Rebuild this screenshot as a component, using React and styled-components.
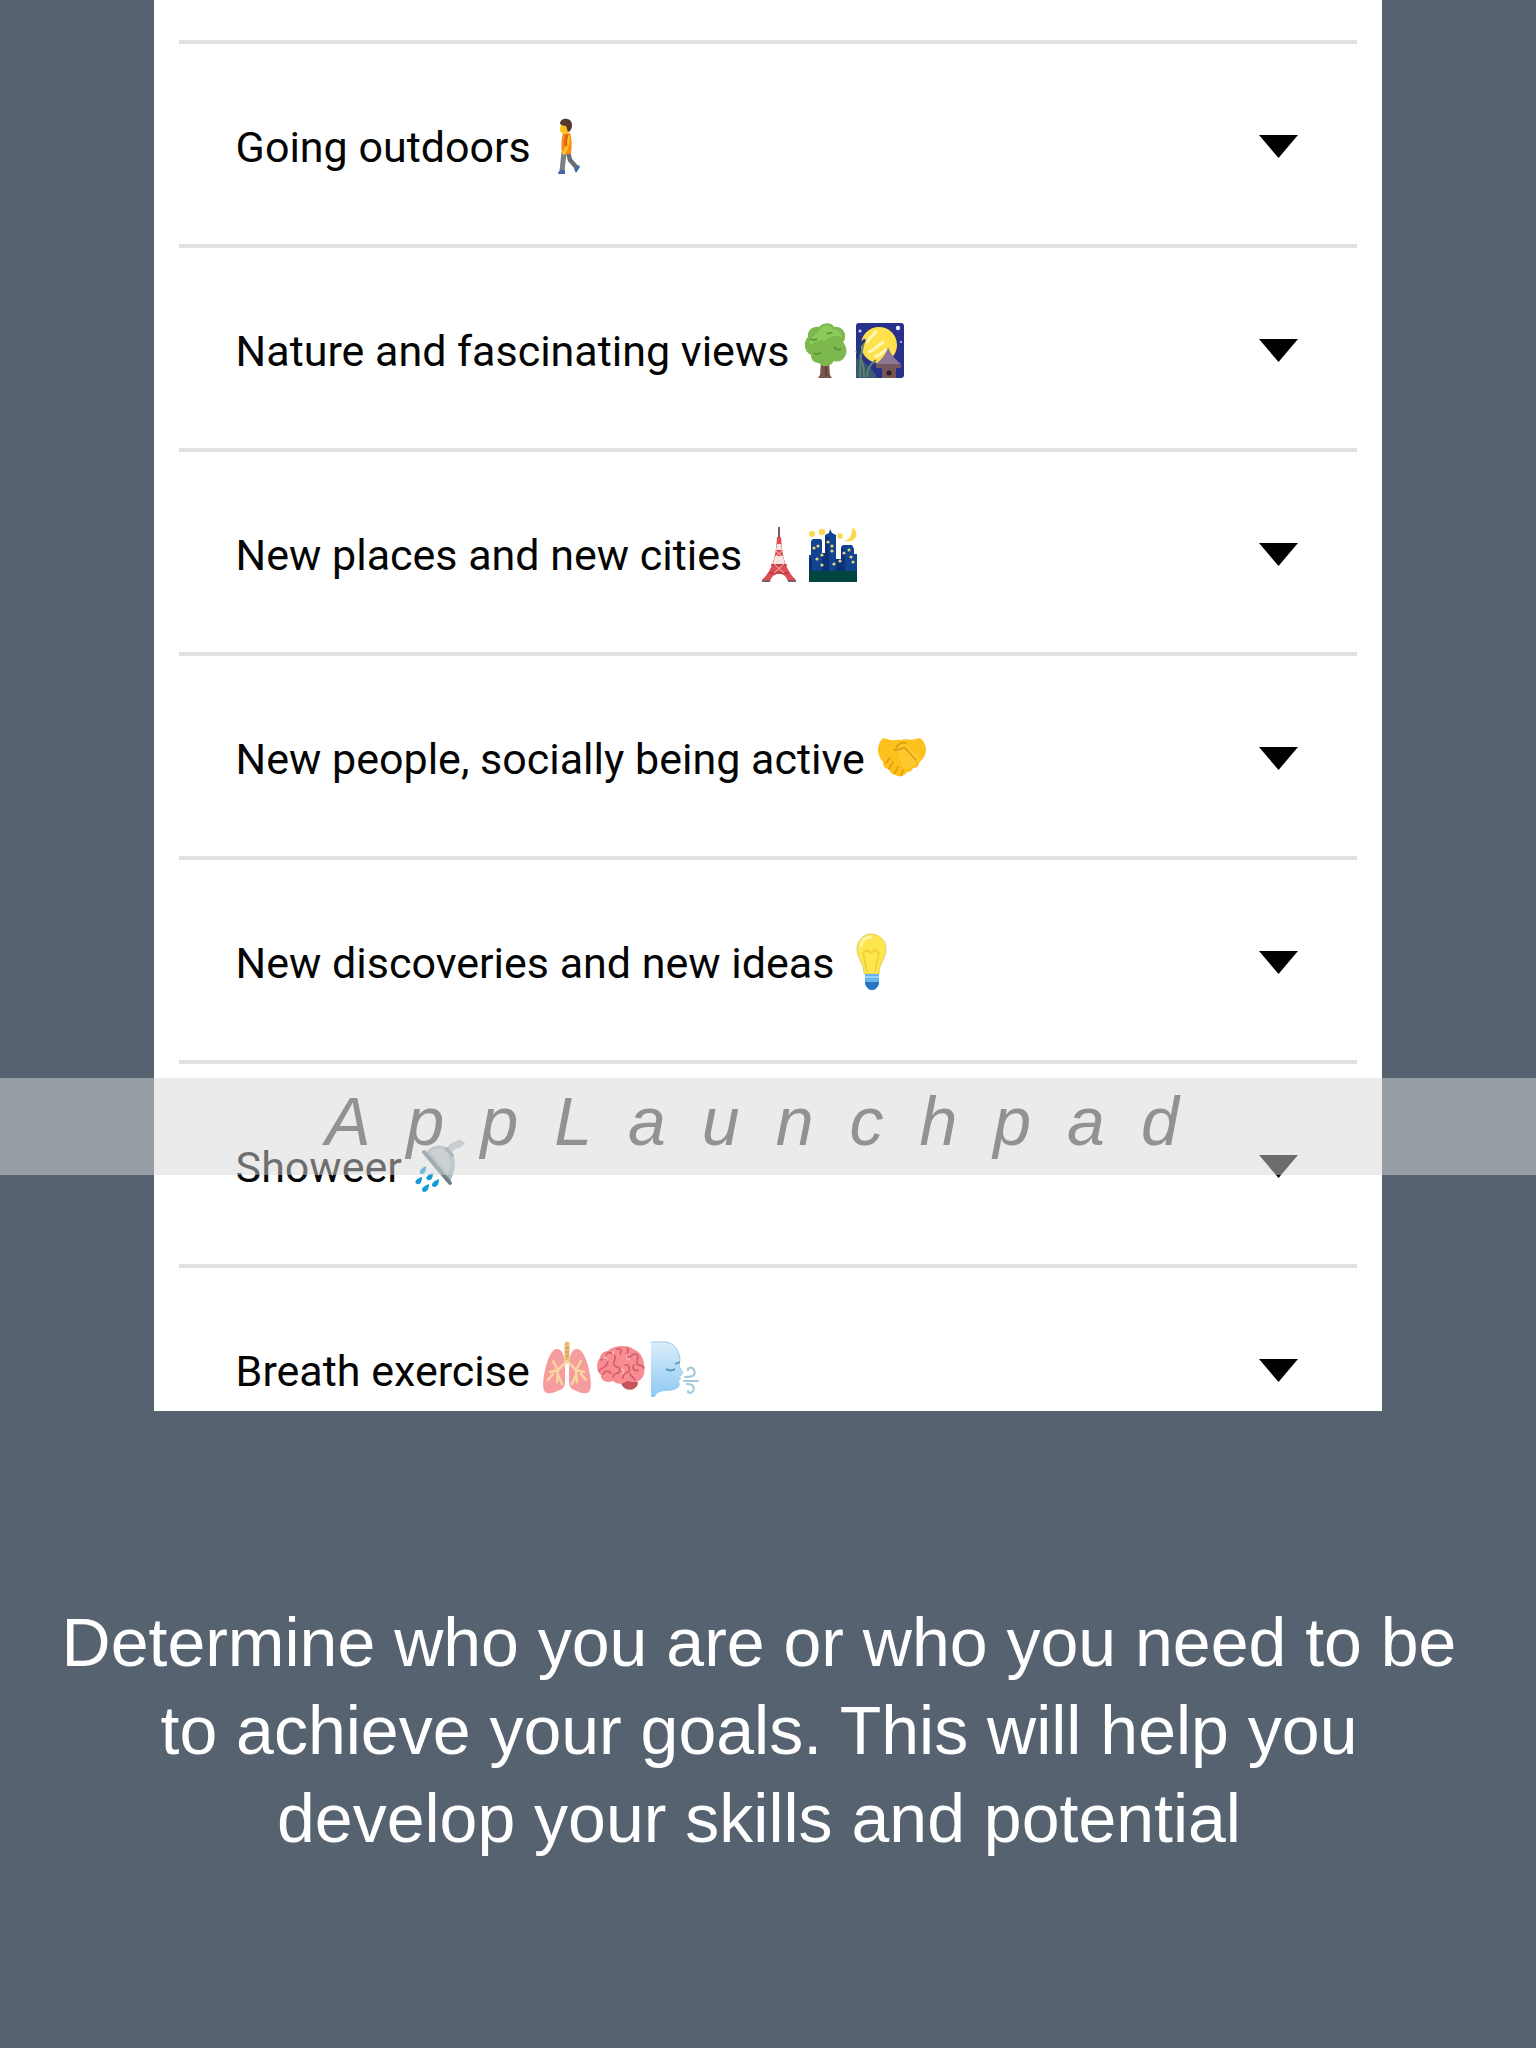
import React from "react";
import styled, { createGlobalStyle } from "styled-components";

const GlobalStyle = createGlobalStyle`
  *, *::before, *::after { box-sizing: border-box; }
  body {
    margin: 0;
    background: #566270;
    font-family: Roboto, "Liberation Sans", sans-serif;
  }
`;

const Page = styled.main`
  position: relative;
  min-height: 100vh;
  background: #566270;
`;

const Card = styled.section`
  width: 80%;
  margin: 0 auto;
  padding: 40px 25px 0;
  background: #fff;
`;

const List = styled.ul`
  margin: 0;
  padding: 0;
  list-style: none;
`;

const Item = styled.li`
  border-top: 4px solid #e1e1e1;
`;

const Row = styled.button`
  display: flex;
  align-items: center;
  justify-content: space-between;
  width: 100%;
  padding: 75px 59px 69px 57px;
  border: 0;
  background: none;
  color: #050505;
  font: 400 43px/56px Roboto, "Liberation Sans", sans-serif;
  text-align: left;
  cursor: pointer;

  ${Item}:last-child & {
    padding-bottom: 12px;
  }
`;

const Label = styled.span`
  display: flex;
  align-items: center;
  gap: 10px;
`;

const Emojis = styled.span`
  display: flex;
`;

const Glyph = styled.svg`
  display: block;
  width: 54px;
  height: 56px;
  overflow: visible;
`;

const Caret = styled.svg`
  display: block;
  flex: none;
  width: 39px;
  height: 23px;
  margin-bottom: 2px;
`;

const Watermark = styled.div`
  position: absolute;
  top: 1078px;
  left: 0;
  right: 0;
  height: 97px;
  padding-left: 4px;
  background: rgba(215, 215, 215, 0.5);
  color: #949191;
  font: italic 400 68px/86px "Liberation Sans", Arial, sans-serif;
  letter-spacing: 36px;
  text-align: center;
  white-space: nowrap;
  pointer-events: none;
`;

const Caption = styled.p`
  margin: 0;
  padding: 187px 58px 0 40px;
  color: #fff;
  font: 400 68px/88px "Liberation Sans", Arial, sans-serif;
  text-align: center;
`;

const Emoji = ({ name, children }) => (
  <Glyph viewBox="0 0 54 56" role="img" aria-label={name}>
    {children}
  </Glyph>
);

const Walker = () => (
  <Emoji name="person walking">
    <path d="M23 33 21 52" stroke="#7b8083" strokeWidth="5" fill="none" />
    <path d="M27 33 29 41 36 49" stroke="#686e71" strokeWidth="4.5" fill="none" />
    <path d="M17 55c0-3 2-4 4-4h3v4z" fill="#3f69a8" />
    <path d="m33 50 5-4 1 2-4 6z" fill="#3f69a8" />
    <path d="M22 14h7c2 5 2 14 1 21h-9c-1-7-1-15 1-21z" fill="#f68b1f" />
    <path d="M27 17c1 7-1 12-4 17" stroke="#fcc21b" strokeWidth="3.5" fill="none" strokeLinecap="round" />
    <path d="M26 15c-1 5-2 8-1 12" stroke="#e65f18" strokeWidth="3" fill="none" />
    <path d="M20 4h8v8l-2 3h-4l-3-3z" fill="#fcc21b" />
    <path d="M19 5c0-7 12-7 12 1 0 4-2 7-4 7-1-2-1-4-2-6-2 0-4-1-6-2z" fill="#543930" />
  </Emoji>
);

const Tree = () => (
  <Emoji name="tree">
    <path d="m22 40-1 12-2 3h14l-2-3-1-12z" fill="#7b5548" />
    <path d="M27 43v10" stroke="#5d4037" strokeWidth="2" />
    <path d="M20 4c4-5 13-5 15 0 6-1 12 4 11 10 0 3-1 4-2 5 4 5 5 11 1 16-3 4-7 4-10 3-4 6-11 7-15 2-6 0-8-4-8-8-7-3-8-13-3-18-1-7 5-11 11-10z" fill="#7cb84d" />
    <path d="M21 6c4-5 11-4 13 0 5 0 9 4 9 9-6-4-14-1-17 3-6-1-12 0-15 5-1-7 4-9 10-17z" fill="#8bcb5c" />
    <path d="M11 16c3 2 5 1 7 0M35 24c2 3 5 3 7 2M15 30c3 2 6 1 7-1M28 10c2 1 3 1 5-1" stroke="#4d9136" strokeWidth="1.5" fill="none" />
  </Emoji>
);

const MoonScene = () => (
  <Emoji name="moon viewing">
    <rect x="3" y="0" width="48" height="55" rx="3" fill="#27318b" />
    <circle cx="26" cy="22" r="18" fill="#fee14d" />
    <path d="M14 20c3-7 7-9 10-12M15 29c8-2 10-8 16-10M21 34c7-1 8-6 14-8" stroke="#fff7b4" strokeWidth="3" fill="none" />
    <path d="M3 55V35c10 4 18 12 21 20z" fill="#345b72" />
    <path d="M7 54c0-15 1-28 5-38M11 54c0-14-3-20-8-26M14 54c0-8 3-13 9-17" stroke="#62806b" strokeWidth="2" fill="none" />
    <path d="M12 17c-5 3-7 9-7 17" stroke="#253a73" strokeWidth="3" fill="none" />
    <path d="M29 38h14v17H29z" fill="#785653" />
    <path d="M35 24c3 8 7 12 13 17v4H23v-4c6-5 10-10 12-17z" fill="#8b7693" />
    <path d="M23 43h25" stroke="#765760" strokeWidth="4" />
    <circle cx="36" cy="50" r="2.5" fill="#2b1f2a" />
    <circle cx="45" cy="5" r="2.2" fill="#e9ecff" />
    <circle cx="7" cy="8" r="1.5" fill="#d1d9ff" />
    <circle cx="48" cy="19" r="1" fill="#d1d9ff" />
  </Emoji>
);

const Tower = () => (
  <Emoji name="Tokyo tower">
    <path d="M27 0v13" stroke="#7d5a5e" strokeWidth="2" />
    <path d="M25 10h4c1 18 4 33 15 43v2h-8c-2-11-16-11-18 0h-8v-2c11-10 14-25 15-43z" fill="#dc4e54" />
    <path d="M25 17h4l1 6h-6zM23 29h8l2 8H21z" fill="#f7e5e4" />
    <path d="M19 38h16M17 46h20" stroke="#b63c45" strokeWidth="1.5" />
    <path d="m22 37 10 9m0-9-10 9M24 24l6 5m0-5-6 5" stroke="#f3b7b6" strokeWidth="1" />
    <path d="M10 54h8M36 54h8" stroke="#776064" strokeWidth="2" />
  </Emoji>
);

const City = () => (
  <Emoji name="night with stars">
    <path d="M3 46V28h2V14l2-2h8l1 2v12h3V8l4-2 1-4 2 4 4 2v24h5V20l2-2h9l2 4v5h3v19z" fill="#114390" />
    <path d="M16 26h3V10h4v37h-7zM30 32h5V22h4v25h-9zM3 31h3v17H3z" fill="#0b3275" />
    <path d="M3 44h48v11H3z" fill="#00463f" />
    <g fill="#e5d477">
      <circle cx="8" cy="21" r="1.6" /><circle cx="12" cy="19" r="1.6" /><circle cx="16" cy="28" r="1.6" />
      <circle cx="11" cy="32" r="1.6" /><circle cx="16" cy="38" r="1.6" /><circle cx="22" cy="15" r="1.6" />
      <circle cx="26" cy="19" r="1.6" /><circle cx="26" cy="24" r="1.6" /><circle cx="28" cy="37" r="1.6" />
      <circle cx="34" cy="34" r="1.6" /><circle cx="38" cy="26" r="1.6" /><circle cx="43" cy="23" r="1.6" />
      <circle cx="45" cy="30" r="1.6" /><circle cx="47" cy="35" r="1.6" />
    </g>
    <g fill="#fbd94c">
      <path d="M46 0c8 5 5 17-8 14 5-1 9-6 8-14z" />
      <circle cx="6" cy="7" r="3" />
      <circle cx="16" cy="5" r="3.2" />
      <circle cx="34" cy="9" r="2.8" />
    </g>
  </Emoji>
);

const Handshake = () => (
  <Emoji name="handshake">
    <path d="m9 7 6 2c4 1 7-1 11 0 5-2 10 1 14-1l5-1c4 3 6 8 6 12 0 5-3 9-7 13 0 4-3 5-6 5-1 3-3 4-6 4-2 4-8 6-11 3-4 0-6-3-7-6-5 0-6-4-6-7-4-5-5-9-5-12 0-5 2-10 6-12z" fill="#fcc11d" />
    <path d="m21 18 8-6 14 13c4 4 1 7-2 6 0 4-3 5-6 4-1 4-5 4-7 2" fill="#fdc92e" />
    <path d="M19 19c4 1 8-3 11-2l11 12M21 17c3-5 7-6 10-5" stroke="#dd9d11" strokeWidth="1.6" fill="none" strokeLinecap="round" />
    <path d="m11 32 4-5m-1 11 4-7m2 11 3-6m3 8 2-5" stroke="#e69d0b" strokeWidth="1.8" fill="none" strokeLinecap="round" />
  </Emoji>
);

const Bulb = () => (
  <Emoji name="light bulb">
    <path d="M27-1c9 0 15 7 15 15 0 10-7 14-7 25H20c0-11-7-15-7-25C13 6 19-1 27-1z" fill="#fde64e" stroke="#e0cf74" strokeWidth="1" />
    <path d="M17 11c1-6 5-9 10-9" stroke="#fff3a0" strokeWidth="3" fill="none" strokeLinecap="round" />
    <path d="m23 37-4-19 4-3 4 3 4-3 4 3-4 19" stroke="#f3cf3c" strokeWidth="2" fill="none" />
    <path d="M21 39h14v10c-2 4-4 6-7 6s-5-2-7-6z" fill="#64b5ef" />
    <path d="M21 47h14v2c-2 4-4 6-7 6s-5-2-7-6z" fill="#2675be" />
    <path d="M21 42h14" stroke="#92d0f8" strokeWidth="2" />
  </Emoji>
);

const Shower = () => (
  <Emoji name="shower">
    <path d="m35 14 5-6c3-3 7-1 10-6" stroke="#b7c3c9" strokeWidth="7" fill="none" />
    <path d="M14 13C23 3 36 5 41 15c4 9 1 19-3 28z" fill="#a9b8be" />
    <path d="M18 13c7-6 15-4 18 3 3 6 2 12 0 18z" fill="#c1cdd1" />
    <path d="m12 13 26 31" stroke="#708087" strokeWidth="4" strokeLinecap="round" />
    <path d="m34 9 7 8" stroke="#82939c" strokeWidth="3" />
    <g fill="#149bd7">
      <path d="M14 27c0 5-1 8-4 8-4 0-3-5 4-8z" />
      <path d="M21 34c0 5-2 8-5 7-3-1-2-5 5-7z" />
      <path d="M10 38c0 5-2 8-5 7-3-1-2-5 5-7z" />
      <path d="M27 40c0 5-2 8-5 8-4-1-2-6 5-8z" />
      <path d="M17 45c0 5-2 8-5 8-4-1-2-6 5-8z" />
    </g>
  </Emoji>
);

const Lungs = () => (
  <Emoji name="lungs">
    <path d="M17 6c6 0 8 8 8 21 0 12 1 18-5 20-5 2-11 5-15 2C2 46 3 36 5 27 8 14 12 6 17 6zM37 6c-6 0-8 8-8 21 0 12-1 18 5 20 5 2 11 5 15 2 3-3 2-13 0-22C46 14 42 6 37 6z" fill="#f59c9e" />
    <path d="M27 1v17" stroke="#edbc70" strokeWidth="5" strokeLinecap="round" />
    <path d="M25 5h4M25 9h4M25 13h4" stroke="#cc8c54" strokeWidth="1" />
    <path d="m27 18-9 9-8 2m8-2-1 12m-4-8-5 6m10-10-5-9m5 14 4 9M27 18l9 9 8 2m-8-2 1 12m4-8 5 6M36 27l5-9m-5 14-4 9" stroke="#f8d6a0" strokeWidth="2.5" fill="none" strokeLinecap="round" />
  </Emoji>
);

const Brain = () => (
  <Emoji name="brain">
    <path d="M27 37h16l1 4c-2 5-7 7-12 5-4-2-5-5-5-9z" fill="#c4535a" />
    <path d="M14 8c4-5 20-7 25-2 7 2 11 10 11 16 1 7 0 12-4 15-5 4-10 1-13 1-5 4-11 3-14 0-8 3-13-2-12-6-5-3-5-13-1-17 0-3 3-7 8-7z" fill="#f58d92" />
    <path d="M7 17c5-3 8 1 6 4-2 5-6 3-8 7m7-16c2-5 8-1 9 1 2 4-3 5-1 9 2 3 6 1 6 5 0 5-7 2-7 7m4-28c4-2 5 3 3 5m7-6c4 3-3 6 0 9 4 2 6-5 9-3 5 3-1 7 1 10 2 2 6 1 7 4M31 22c4-1 5 3 4 6-2 3-7 2-6 7m11-13c-3 3 1 7 4 5m-27 3c-3-3-6-2-8 1m27 0c2 4 4 3 5 6" stroke="#d85f6b" strokeWidth="1.8" fill="none" strokeLinecap="round" />
    <path d="M9 16c3-2 5 0 4 2m5-9c2 0 2 2 1 3m14-1c-2 3 0 6 3 5m-9 10c3 0 4 3 1 5" stroke="#ffb6b5" strokeWidth="1.5" fill="none" />
  </Emoji>
);

const WindFace = () => (
  <Emoji name="wind face">
    <defs>
      <linearGradient id="wind-face-fill" x1="0" y1="0" x2="0" y2="1">
        <stop offset="0" stopColor="#d9eefb" />
        <stop offset="1" stopColor="#90c9f2" />
      </linearGradient>
    </defs>
    <path d="M3-1h14c10 1 14 9 15 17l-1 7 4 7-3 3 1 3-2 2 1 3c-1 6-8 7-16 7-5 1-8 2-9 6H3z" fill="url(#wind-face-fill)" />
    <path d="M3-1h14c10 1 14 9 15 17l-1 7 4 7-3 3" stroke="#a6c6dc" strokeWidth="1" fill="none" />
    <path d="M18 26c3 2 6 2 9 0M27 21l5-2" stroke="#5594b7" strokeWidth="1.8" fill="none" />
    <path d="M37 34c9 0 11-2 9-7-2-4-7-2-6 0M36 38h14M39 41c6 0 8 3 6 7-2 3-5 2-5 0" stroke="#a5cadd" strokeWidth="2.2" fill="none" strokeLinecap="round" />
  </Emoji>
);

const activities = [
  { label: "Going outdoors", icons: [Walker] },
  { label: "Nature and fascinating views", icons: [Tree, MoonScene] },
  { label: "New places and new cities", icons: [Tower, City] },
  { label: "New people, socially being active", icons: [Handshake] },
  { label: "New discoveries and new ideas", icons: [Bulb] },
  { label: "Showeer", icons: [Shower] },
  { label: "Breath exercise", icons: [Lungs, Brain, WindFace] },
];

const Activity = ({ label, icons }) => (
  <Item>
    <Row type="button" aria-expanded="false">
      <Label>
        {label}
        <Emojis>
          {icons.map((Icon, index) => (
            <Icon key={index} />
          ))}
        </Emojis>
      </Label>
      <Caret viewBox="0 0 39 23" aria-hidden="true">
        <path d="M0 0h39L19.5 23z" fill="#000" />
      </Caret>
    </Row>
  </Item>
);

export default function App() {
  return (
    <>
      <GlobalStyle />
      <Page>
        <Card>
          <List>
            {activities.map((activity) => (
              <Activity key={activity.label} {...activity} />
            ))}
          </List>
        </Card>
        <Watermark>AppLaunchpad</Watermark>
        <Caption>
          Determine who you are or who you need to be to achieve your goals. This will help you
          develop your skills and potential
        </Caption>
      </Page>
    </>
  );
}
